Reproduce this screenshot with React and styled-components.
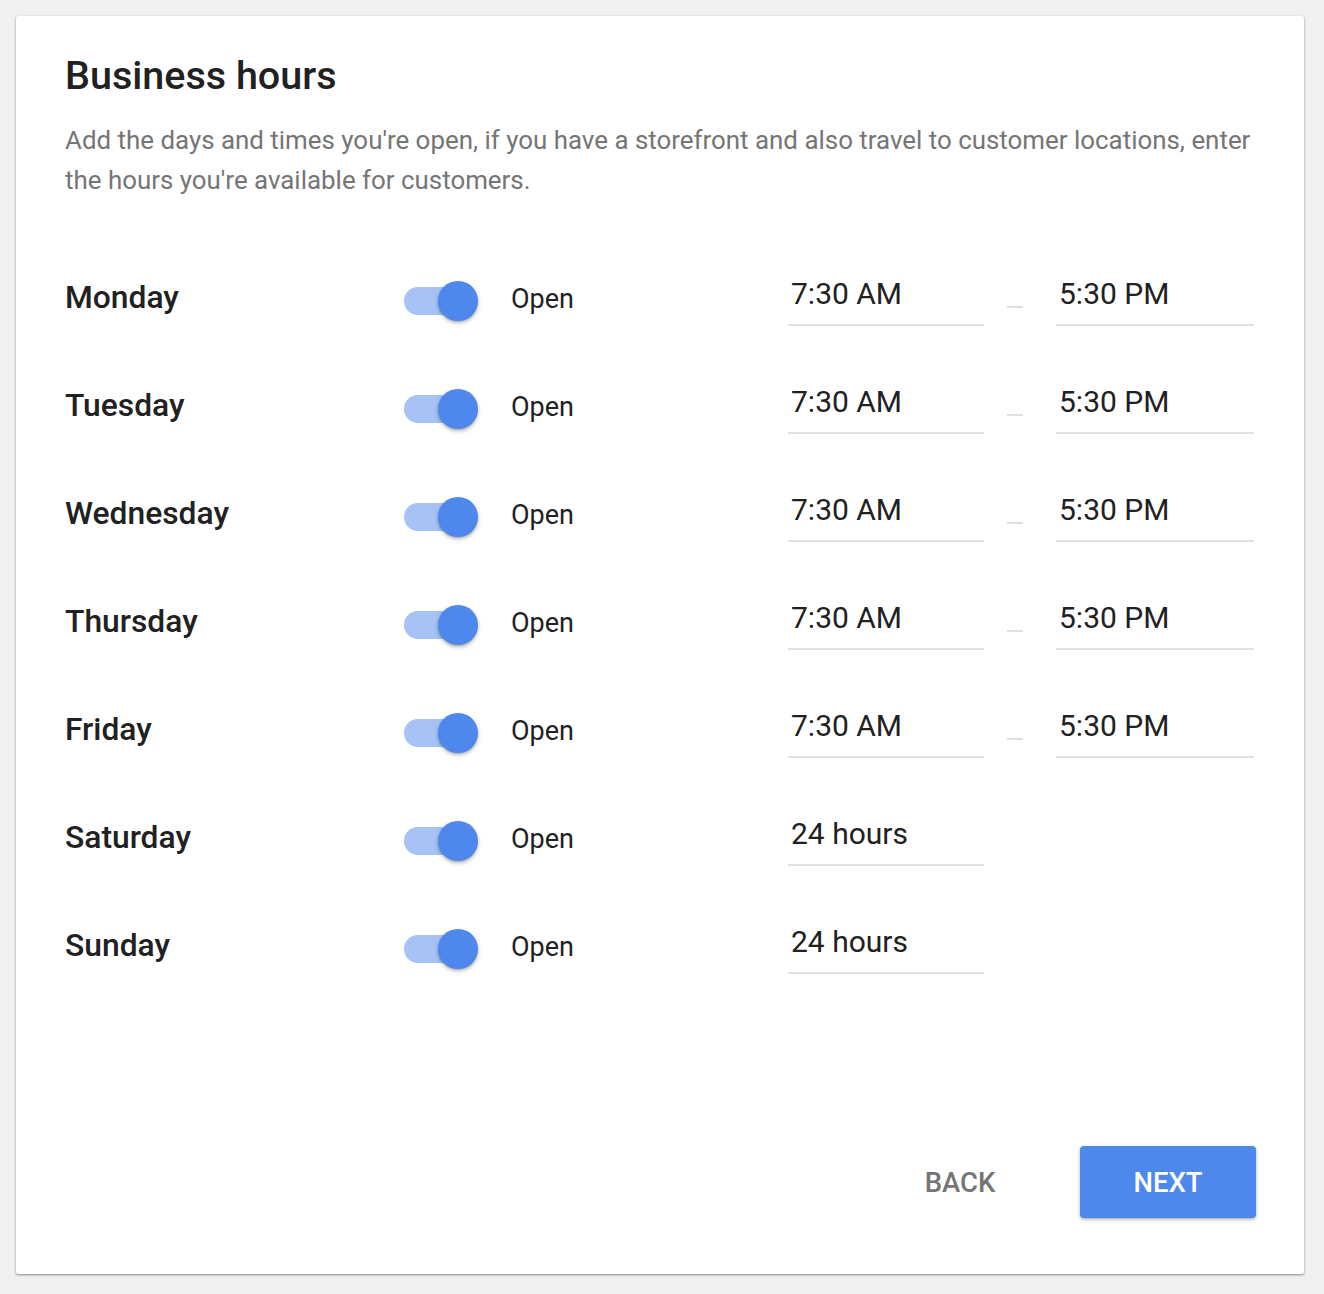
import React, { useState } from 'react';
import styled, { createGlobalStyle } from 'styled-components';

const GlobalStyle = createGlobalStyle`
  html, body {
    margin: 0;
    padding: 0;
    background: #f1f1f1;
    font-family: Roboto, "Liberation Sans", Arial, sans-serif;
  }
  * { box-sizing: border-box; }
`;

const Page = styled.div`
  padding: 16px 20px 20px 16px;
`;

const Card = styled.div`
  width: 1288px;
  background: #fff;
  border-radius: 2px;
  box-shadow: 0 1px 3px rgba(0, 0, 0, 0.28), 0 1px 2px rgba(0, 0, 0, 0.18);
  padding: 38px 50px 56px 49px;
`;

const Title = styled.h1`
  margin: 0;
  font-size: 39.5px;
  line-height: 44px;
  font-weight: 500;
  color: #212121;
`;

const Description = styled.p`
  margin: 22px -8px 45px 0;
  font-size: 25.9px;
  line-height: 40px;
  color: #757575;
`;

const Row = styled.div`
  display: grid;
  grid-template-columns: 339px 107px 277px 196px 72px 198px;
  align-items: center;
  height: 108px;
`;

const Day = styled.div`
  font-size: 31.8px;
  font-weight: 500;
  color: #212121;
  margin-top: -4px;
`;

const Switch = styled.button`
  position: relative;
  width: 74px;
  height: 40px;
  padding: 0;
  border: none;
  background: transparent;
  cursor: pointer;
  margin-top: 3px;

  &::before {
    content: '';
    position: absolute;
    left: 0;
    top: 6px;
    width: 68px;
    height: 28px;
    border-radius: 14px;
    background: ${(p) => (p.on ? '#a7c3f6' : '#cfcfcf')};
  }

  &::after {
    content: '';
    position: absolute;
    top: 0;
    left: ${(p) => (p.on ? '34px' : '0')};
    width: 40px;
    height: 40px;
    border-radius: 50%;
    background: ${(p) => (p.on ? '#4f88ec' : '#fafafa')};
    box-shadow: 0 2px 4px rgba(0, 0, 0, 0.25), 0 1px 2px rgba(0, 0, 0, 0.15);
  }
`;

const Status = styled.div`
  font-size: 27px;
  color: #212121;
`;

const TimeField = styled.div`
  font-size: 30px;
  line-height: 36px;
  color: #212121;
  padding: 0 0 12px 3px;
  border-bottom: 2px solid #e0e0e0;
  margin-top: 4px;
`;

const Dash = styled.div`
  width: 16px;
  height: 2px;
  background: #e0e0e0;
  margin: 16px 0 0 23px;
`;

const Footer = styled.div`
  display: flex;
  justify-content: flex-end;
  gap: 32px;
  margin-top: 145px;
  margin-right: -2px;
`;

const Button = styled.button`
  width: 176px;
  height: 72px;
  border: none;
  border-radius: 4px;
  font-family: inherit;
  font-size: 27.5px;
  font-weight: 500;
  cursor: pointer;
  color: ${(p) => (p.primary ? '#fff' : '#757575')};
  background: ${(p) => (p.primary ? '#4f88eb' : 'transparent')};
  box-shadow: ${(p) =>
    p.primary ? '0 2px 4px rgba(0, 0, 0, 0.22), 0 1px 2px rgba(0, 0, 0, 0.14)' : 'none'};
`;

const initialDays = [
  { name: 'Monday', from: '7:30 AM', to: '5:30 PM' },
  { name: 'Tuesday', from: '7:30 AM', to: '5:30 PM' },
  { name: 'Wednesday', from: '7:30 AM', to: '5:30 PM' },
  { name: 'Thursday', from: '7:30 AM', to: '5:30 PM' },
  { name: 'Friday', from: '7:30 AM', to: '5:30 PM' },
  { name: 'Saturday', from: '24 hours' },
  { name: 'Sunday', from: '24 hours' },
].map((d) => ({ ...d, open: true }));

const App = () => {
  const [days, setDays] = useState(initialDays);

  const toggle = (name) => {
    setDays((prev) => prev.map((d) => (d.name === name ? { ...d, open: !d.open } : d)));
  };

  return (
    <Page>
      <GlobalStyle />
      <Card>
        <Title>Business hours</Title>
        <Description>
          Add the days and times you're open, if you have a storefront and also travel to
          customer locations, enter the hours you're available for customers.
        </Description>
        {days.map((d) => (
          <Row key={d.name}>
            <Day>{d.name}</Day>
            <Switch on={d.open ? 1 : 0} onClick={() => toggle(d.name)} aria-label={d.name} />
            <Status>{d.open ? 'Open' : 'Closed'}</Status>
            {d.open && <TimeField>{d.from}</TimeField>}
            {d.open && d.to && <Dash />}
            {d.open && d.to && <TimeField>{d.to}</TimeField>}
          </Row>
        ))}
        <Footer>
          <Button>BACK</Button>
          <Button primary>NEXT</Button>
        </Footer>
      </Card>
    </Page>
  );
};

export default App;
